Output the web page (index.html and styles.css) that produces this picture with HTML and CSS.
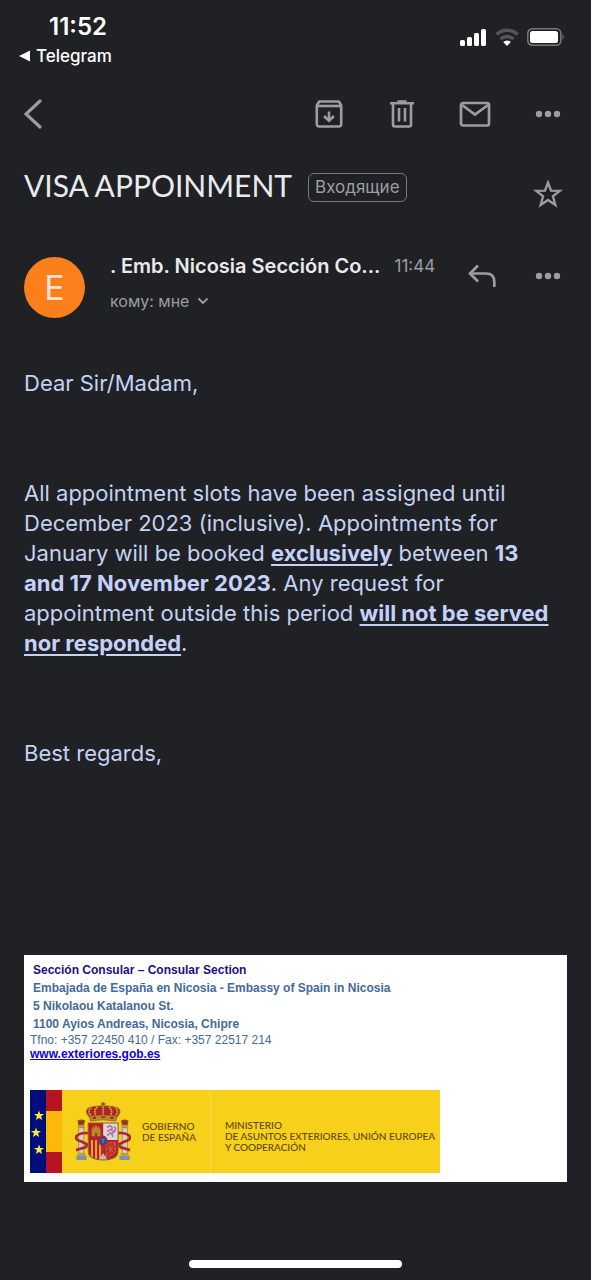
FILE: index.html
```html
<!DOCTYPE html>
<html lang="ru">
<head>
    <meta charset="UTF-8">
    <meta name="viewport" content="width=device-width, initial-scale=1.0">
    <title>VISA APPOINMENT</title>
    <link rel="stylesheet" href="styles.css">
</head>
<body>
    <div class="screen">
        <div class="status_bar">
            <div class="status_left">
                <p class="clock">11:52</p>
                <a href="#" class="back_app">
                    <svg width="11" height="12" viewBox="0 0 11 12"><path d="M0 6 L11 0.5 V11.5 Z" fill="#fff"/></svg>
                    Telegram
                </a>
            </div>
            <div class="status_right">
                <svg width="27" height="18" viewBox="0 0 27 18" fill="#fff">
                    <rect x="0" y="12" width="5" height="6" rx="1.5"/>
                    <rect x="7" y="9" width="5" height="9" rx="1.5"/>
                    <rect x="14" y="5" width="5" height="13" rx="1.5"/>
                    <rect x="21" y="1" width="5" height="17" rx="1.5"/>
                </svg>
                <svg width="24" height="18" viewBox="0 0 24 18" fill="none">
                    <path d="M1.5 6.5 A15 15 0 0 1 22.5 6.5" stroke="#55565a" stroke-width="3.6"/>
                    <path d="M5.5 11 A9.5 9.5 0 0 1 18.5 11" stroke="#55565a" stroke-width="3.4"/>
                    <path d="M8.2 14 Q12 11 15.8 14 L12 18 Z" fill="#fff"/>
                </svg>
                <svg width="38" height="18" viewBox="0 0 38 18">
                    <rect x="0.8" y="0.8" width="33" height="16.4" rx="4.5" fill="none" stroke="#77787b" stroke-width="1.5"/>
                    <rect x="3" y="3" width="28" height="12" rx="2.5" fill="#fff"/>
                    <path d="M35.5 6 Q38 9 35.5 12 Z" fill="#77787b"/>
                </svg>
            </div>
        </div>

        <nav class="toolbar">
            <button type="button" class="icon_btn back" aria-label="Назад">
                <svg width="18" height="30" viewBox="0 0 18 30"><path d="M16 2 L2 15 L16 28" fill="none" stroke="#9b9da3" stroke-width="3.2" stroke-linecap="round"/></svg>
            </button>
            <div class="actions">
                <button type="button" class="icon_btn" aria-label="Архивировать">
                    <svg width="28" height="28" viewBox="0 0 28 28" fill="none" stroke="#9b9da3" stroke-width="2.6">
                        <path d="M1.8 5.5 L4.2 1.5 H23.8 L26.2 5.5 V24 Q26.2 26.5 23.7 26.5 H4.3 Q1.8 26.5 1.8 24 Z" stroke-linejoin="round"/>
                        <path d="M2 6 H26"/>
                        <path d="M14 11.5 V20 M9 16 L14 20.8 L19 16"/>
                    </svg>
                </button>
                <button type="button" class="icon_btn" aria-label="Удалить">
                    <svg width="26" height="28" viewBox="0 0 26 28" fill="none" stroke="#9b9da3" stroke-width="2.6">
                        <path d="M1 3.2 H25 M8.5 1.5 H17.5"/>
                        <path d="M4 3.2 V24.5 Q4 26.5 6 26.5 H20 Q22 26.5 22 24.5 V3.2"/>
                        <path d="M10 8 V21.5 M16 8 V21.5"/>
                    </svg>
                </button>
                <button type="button" class="icon_btn" aria-label="Непрочитанное">
                    <svg width="32" height="26" viewBox="0 0 32 26" fill="none" stroke="#9b9da3" stroke-width="2.7">
                        <rect x="2" y="2" width="28" height="22.5" rx="2"/>
                        <path d="M3 4 L16 13.5 L29 4"/>
                    </svg>
                </button>
                <button type="button" class="icon_btn" aria-label="Ещё">
                    <svg width="26" height="8" viewBox="0 0 26 8" fill="#9b9da3"><circle cx="4" cy="4" r="3.2"/><circle cx="13" cy="4" r="3.2"/><circle cx="22" cy="4" r="3.2"/></svg>
                </button>
            </div>
        </nav>

        <div class="subject">
            <h1>VISA APPOINMENT</h1>
            <span class="label">Входящие</span>
            <button type="button" class="icon_btn star" aria-label="Пометить">
                <svg width="30" height="30" viewBox="0 0 30 30"><path d="M15 3.5 L18 11.6 L26.8 11.9 L19.9 17.3 L22.4 26 L15 21 L7.6 26 L10.1 17.3 L3.2 11.9 L12 11.6 Z" fill="none" stroke="#9b9da3" stroke-width="2.3"/></svg>
            </button>
        </div>

        <header class="sender">
            <div class="avatar">E</div>
            <div class="sender_info">
                <div class="sender_top">
                    <p class="name">. Emb. Nicosia Sección Co...</p>
                    <p class="time">11:44</p>
                </div>
                <button type="button" class="to">кому: мне
                    <svg width="12" height="8" viewBox="0 0 12 8"><path d="M1.5 1.5 L6 6 L10.5 1.5" fill="none" stroke="#9b9da3" stroke-width="1.8"/></svg>
                </button>
            </div>
            <div class="sender_btns">
                <button type="button" class="icon_btn" aria-label="Ответить">
                    <svg width="28" height="24" viewBox="0 0 28 24" fill="none" stroke="#9b9da3" stroke-width="2.7"><path d="M10 1.5 L2 9.5 L10 17.5"/><path d="M2.5 9.5 H18 Q26.3 9.5 26.3 18 V23"/></svg>
                </button>
                <button type="button" class="icon_btn" aria-label="Ещё">
                    <svg width="26" height="8" viewBox="0 0 26 8" fill="#9b9da3"><circle cx="4" cy="4" r="3.2"/><circle cx="13" cy="4" r="3.2"/><circle cx="22" cy="4" r="3.2"/></svg>
                </button>
            </div>
        </header>

        <main class="message">
            <p>Dear Sir/Madam,</p>
            <p>All appointment slots have been assigned until December 2023 (inclusive). Appointments for January will be booked <b class="line">exclusively</b> between <b>13<br>and 17 November 2023</b>. Any request for<br>appointment outside this period <b class="line">will not be served<br>nor responded</b>.</p>
            <p>Best regards,</p>
        </main>

        <footer class="signature">
            <address>
                <div class="office">
                    <p class="section">Sección Consular – Consular Section</p>
                    <p>Embajada de España en Nicosia - Embassy of Spain in Nicosia</p>
                    <p>5 Nikolaou Katalanou St.</p>
                    <p>1100 Ayios Andreas, Nicosia, Chipre</p>
                </div>
                <p class="phone">Tfno: +357 22450 410 / Fax: +357 22517 214</p>
                <a href="#" class="site">www.exteriores.gob.es</a>
            </address>

            <div class="banner">
                <svg class="flags" width="32" height="83" viewBox="0 0 32 83">
                    <rect width="16" height="83" fill="#000e7b"/>
                    <rect x="16" width="16" height="83" fill="#b51420"/>
                    <rect x="16" y="21" width="16" height="41" fill="#fcb90c"/>
                    <g fill="#f8e73c">
                        <path id="st" d="M9 20.500l1.300 3.400 3.700.1-2.900 2.300 1 3.600-3.100-2-3.100 2 1-3.600-2.900-2.300 3.700-.1z"/>
                        <use href="#st" x="-3" y="17"/>
                        <use href="#st" y="34"/>
                    </g>
                </svg>
                <!-- escudo -->
                <svg class="arms" width="56" height="59" viewBox="0 0 165 174">
                    <path d="M83 0 V16 M76 6 H90" stroke="#77601f" stroke-width="4"/>
                    <path d="M43 45 Q24 24 44 16 Q62 10 83 12 Q104 10 122 16 Q142 24 123 45 Z" fill="#b3202b" stroke="#8b6c20" stroke-width="3"/>
                    <path d="M83 13 V44 M64 44 Q51 25 67 14 M102 44 Q115 25 99 14 M49 43 Q34 27 48 17 M117 43 Q132 27 118 17" fill="none" stroke="#d7ae38" stroke-width="5" stroke-dasharray="5 2"/>
                    <path d="M42 42 Q83 34 124 42 L120 56 Q83 49 46 56 Z" fill="#bd8b27" stroke="#75501e" stroke-width="2"/>
                    <path d="M52 47 H62 M77 45 H89 M104 47 H114" stroke="#a71930" stroke-width="5"/>
                    <g id="pillar">
                        <path d="M9 56 Q18 50 28 56 L25 68 H11 Z" fill="#a92d27" stroke="#72602a" stroke-width="3"/>
                        <rect x="8" y="68" width="21" height="8" fill="#c59a31"/>
                        <rect x="11" y="76" width="15" height="78" fill="#d3d0c4" stroke="#7e7a70" stroke-width="2"/>
                        <rect x="8" y="150" width="22" height="8" fill="#c59a31"/>
                        <rect x="4" y="158" width="30" height="13" fill="#7e93a3"/>
                        <path d="M38 92 Q16 89 4 101 Q-1 111 17 116 L34 124 Q38 134 18 137 L3 142" fill="none" stroke="#b4242e" stroke-width="8"/>
                    </g>
                    <use href="#pillar" transform="translate(165 0) scale(-1 1)"/>
                    <path d="M39 62 H127 V144 Q127 171 83 171 Q39 171 39 144 Z" fill="#b71d31"/>
                    <path d="M83 62 H127 V112 H83 Z" fill="#ddd6dc"/>
                    <path d="M39 112 H83 V171 Q39 171 39 144 Z" fill="#dda92c"/>
                    <path d="M44 112 V158 M56 112 V166 M68 112 V170 M80 112 V171" stroke="#b71d31" stroke-width="6"/>
                    <path d="M49 101 V79 H52 V72 H57 V77 H59 V69 H65 V77 H67 V72 H72 V79 H75 V101 Z" fill="#bd8920"/>
                    <path d="M59 101 V92 H65 V101 Z" fill="#554a29"/>
                    <path d="M94 74 L104 70 L110 76 L106 82 L116 88 L108 94 L112 103 M105 81 L94 86 M106 89 L95 99 M114 90 Q123 80 116 72" fill="none" stroke="#b274a3" stroke-width="5"/>
                    <path d="M91 120 H119 V145 Q112 158 92 161 Z M91 120 L117 154 M119 120 L92 158 M105 119 V157 M91 138 H119" fill="none" stroke="#d05a35" stroke-width="3"/>
                    <path d="M69 171 L83 151 L97 171 Z" fill="#c9b6ac"/>
                    <ellipse cx="83" cy="115" rx="11" ry="14" fill="#264f92" stroke="#a52835" stroke-width="4"/>
                    <path d="M79 111 H87 M80 118 H86" stroke="#9b956b" stroke-width="3"/>
                    <path d="M39 62 H127 V144 Q127 171 83 171 Q39 171 39 144 Z" fill="none" stroke="#8a632a" stroke-width="3"/>
                </svg>
                <p class="gov">GOBIERNO<br>DE ESPAÑA</p>
                <p class="ministry">MINISTERIO<br>DE ASUNTOS EXTERIORES, UNIÓN EUROPEA<br>Y COOPERACIÓN</p>
            </div>
        </footer>

        <div class="home_bar"></div>
    </div>
</body>
</html>
```
FILE: styles.css
```css
* {
    margin: 0;
    padding: 0;
    box-sizing: border-box;
}

body {
    background-color: #202125;
    color: #e8eaed;
    font-family: Inter, "Noto Sans", sans-serif;
}

button {
    border: 0;
    background: none;
    font-family: inherit;
    color: inherit;
    cursor: pointer;
}

svg {
    display: block;
    flex-shrink: 0;
}

.screen {
    display: flex;
    flex-direction: column;
    min-height: 100vh;
}

/* status bar */
.status_bar {
    display: flex;
    justify-content: space-between;
    align-items: flex-start;
    padding: 12px 26px 0 19px;
    color: #fff;
}

.clock {
    padding-left: 30px;
    font-size: 24px;
    line-height: 30px;
    font-weight: 600;
}

.back_app {
    display: flex;
    align-items: center;
    gap: 6px;
    color: #fff;
    font-size: 17px;
    line-height: 28px;
    font-weight: 500;
    text-decoration: none;
}

.status_right {
    display: flex;
    gap: 8px;
    padding-top: 16px;
}

/* toolbar */
.toolbar {
    display: flex;
    justify-content: space-between;
    padding: 20px 19px 0 24px;
}

.actions {
    display: flex;
    gap: 25px;
}

.icon_btn {
    display: flex;
    align-items: center;
    justify-content: center;
    width: 48px;
    height: 48px;
}

.icon_btn.back {
    justify-content: flex-start;
}

/* subject */
.subject {
    display: flex;
    align-items: flex-start;
    padding: 32px 19px 0 24px;
}

.subject h1 {
    font-family: Lato, sans-serif;
    font-size: 30px;
    line-height: 30px;
    font-weight: 400;
}

.label {
    margin: 3px 0 0 16px;
    padding: 0 6px;
    border: 1px solid #77797e;
    border-radius: 6px;
    color: #9b9da3;
    font-size: 17px;
    line-height: 27px;
}

.star {
    margin-left: auto;
}

/* sender */
.sender {
    display: flex;
    padding: 34px 19px 0 24px;
}

.avatar {
    width: 61px;
    height: 61px;
    margin-top: 5px;
    border-radius: 50%;
    background-color: #fb7f1a;
    color: #fbe3d3;
    font-size: 34px;
    line-height: 61px;
    text-align: center;
    flex-shrink: 0;
}

.sender_info {
    flex: 1;
    min-width: 0;
    padding-left: 25px;
}

.sender_top {
    display: flex;
    gap: 14px;
    line-height: 28px;
    white-space: nowrap;
}

.name {
    font-size: 20px;
    font-weight: 600;
}

.time {
    color: #9b9da3;
    font-size: 17px;
}

.to {
    display: flex;
    align-items: center;
    gap: 8px;
    margin-top: 8px;
    color: #9b9da3;
    font-size: 16px;
    line-height: 26px;
}

.sender_btns {
    display: flex;
    gap: 18px;
}

/* message */
.message {
    display: flex;
    flex-direction: column;
    gap: 80px;
    padding: 50px 24px 0;
    color: #c3d3f3;
    font-size: 22px;
    line-height: 30px;
}

.message b {
    font-weight: 700;
    color: #c3d1fb;
}

.message .line {
    text-decoration: underline;
    text-underline-offset: 3px;
}

/* signature */
.signature {
    margin: 187px 24px 0;
    padding: 6px 6px 9px;
    background-color: #fff;
    font-family: "Liberation Sans", sans-serif;
}

.signature address {
    color: #44699b;
    font-size: 12px;
    line-height: 14px;
    font-style: normal;
}

.office {
    padding-left: 3px;
    font-weight: 700;
    line-height: 18px;
}

.section {
    color: #1c0f84;
}

.site {
    display: block;
    color: #1000e6;
    font-weight: 700;
}

.banner {
    display: flex;
    align-items: center;
    width: 410px;
    max-width: 100%;
    margin-top: 29px;
    background-color: #f6d01b;
    color: #5c4a08;
    font-family: Lato, sans-serif;
    font-size: 10px;
    line-height: 11px;
    font-weight: 500;
    white-space: nowrap;
}

.arms {
    margin-left: 13px;
}

.gov {
    padding: 0 14px 0 11px;
}

/* first line level with the first line of .gov */
.ministry {
    align-self: stretch;
    border-left: 1px solid #f9dc4a;
    padding: 30px 0 0 14px;
}

.home_bar {
    width: 36%;
    height: 8px;
    margin: auto auto 12px;
    border-radius: 4px;
    background-color: #fff;
}
```
